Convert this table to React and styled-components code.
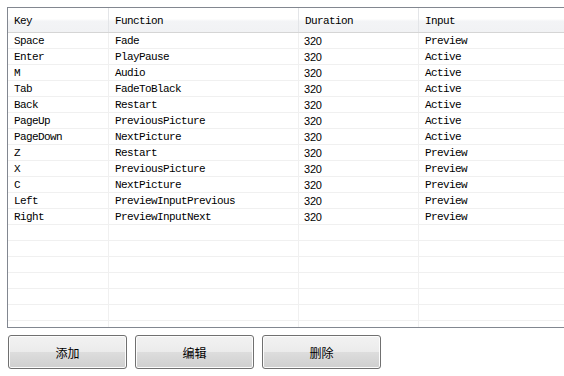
import React from 'react';
import styled, { createGlobalStyle } from 'styled-components';

const Global = createGlobalStyle`
    html, body {
        margin: 0;
        padding: 0;
        background: #ffffff;
        overflow: hidden;
    }
`;

const bindings = [
    ['Space', 'Fade', '320', 'Preview'],
    ['Enter', 'PlayPause', '320', 'Active'],
    ['M', 'Audio', '320', 'Active'],
    ['Tab', 'FadeToBlack', '320', 'Active'],
    ['Back', 'Restart', '320', 'Active'],
    ['PageUp', 'PreviousPicture', '320', 'Active'],
    ['PageDown', 'NextPicture', '320', 'Active'],
    ['Z', 'Restart', '320', 'Preview'],
    ['X', 'PreviousPicture', '320', 'Preview'],
    ['C', 'NextPicture', '320', 'Preview'],
    ['Left', 'PreviewInputPrevious', '320', 'Preview'],
    ['Right', 'PreviewInputNext', '320', 'Preview'],
];

const columns = ['Key', 'Function', 'Duration', 'Input'];
const emptyRows = 8;

function App() {
    const rows = [...bindings, ...Array.from({ length: emptyRows }, () => ['', '', '', ''])];
    return (
        <Page>
            <Global />
            <ListView>
                <HeaderRow>
                    {columns.map((c) => (
                        <HeaderCell key={c}>{c}</HeaderCell>
                    ))}
                </HeaderRow>
                <Body>
                    {rows.map((r, i) => (
                        <Row key={i}>
                            {r.map((v, j) => (
                                <Cell key={j} $num={j === 2}>{v}</Cell>
                            ))}
                        </Row>
                    ))}
                </Body>
            </ListView>
            <Buttons>
                <Button>添加</Button>
                <Button>编辑</Button>
                <Button>删除</Button>
            </Buttons>
        </Page>
    );
}

const Page = styled.div`
    width: 564px;
    height: 376px;
    padding: 7px 0 0 7px;
    box-sizing: border-box;
    overflow: hidden;
    font-family: "Liberation Mono", monospace;
    color: #000000;
`;

const ListView = styled.div`
    width: 620px;
    border: 1px solid #828790;
    border-right: none;
    background: #ffffff;
`;

const grid = `
    display: grid;
    grid-template-columns: 101px 190px 120px 209px;
`;

const HeaderRow = styled.div`
    ${grid}
    height: 25px;
    box-sizing: border-box;
    border-bottom: 1px solid #d5d5d5;
    background: linear-gradient(#ffffff 0%, #ffffff 45%, #f3f4f6 55%, #f1f2f4 100%);
`;

const HeaderCell = styled.div`
    display: flex;
    align-items: center;
    padding: 2px 0 0 6px;
    font-size: 11px;
    letter-spacing: -0.6px;
    border-right: 1px solid #e3e5e8;
`;

const Body = styled.div`
    height: 294px;
    overflow: hidden;
`;

const Row = styled.div`
    ${grid}
    height: 16px;
    box-sizing: border-box;
    border-bottom: 1px solid #f0f0f0;
`;

const Cell = styled.div`
    display: flex;
    align-items: center;
    padding: 1px 0 0 ${(p) => (p.$num ? 5 : 6)}px;
    font-family: ${(p) => (p.$num ? '"Liberation Sans", sans-serif' : '"Liberation Mono", monospace')};
    font-size: 11px;
    letter-spacing: ${(p) => (p.$num ? '-0.2px' : '-0.6px')};
    white-space: nowrap;
    border-right: 1px solid #f0f0f0;
`;

const Buttons = styled.div`
    display: flex;
    gap: 8px;
    margin-top: 7px;
    padding-left: 1px;
`;

const Button = styled.button`
    width: 119px;
    height: 34px;
    border: 1px solid #707070;
    border-radius: 3px;
    box-shadow: inset 0 0 0 1px #fcfcfc;
    background: linear-gradient(#f2f2f2 0%, #ebebeb 50%, #dddddd 50%, #cfcfcf 100%);
    font-family: "Noto Sans CJK SC", sans-serif;
    font-size: 12px;
    color: #000000;
    padding: 0;
`;

export default App;
